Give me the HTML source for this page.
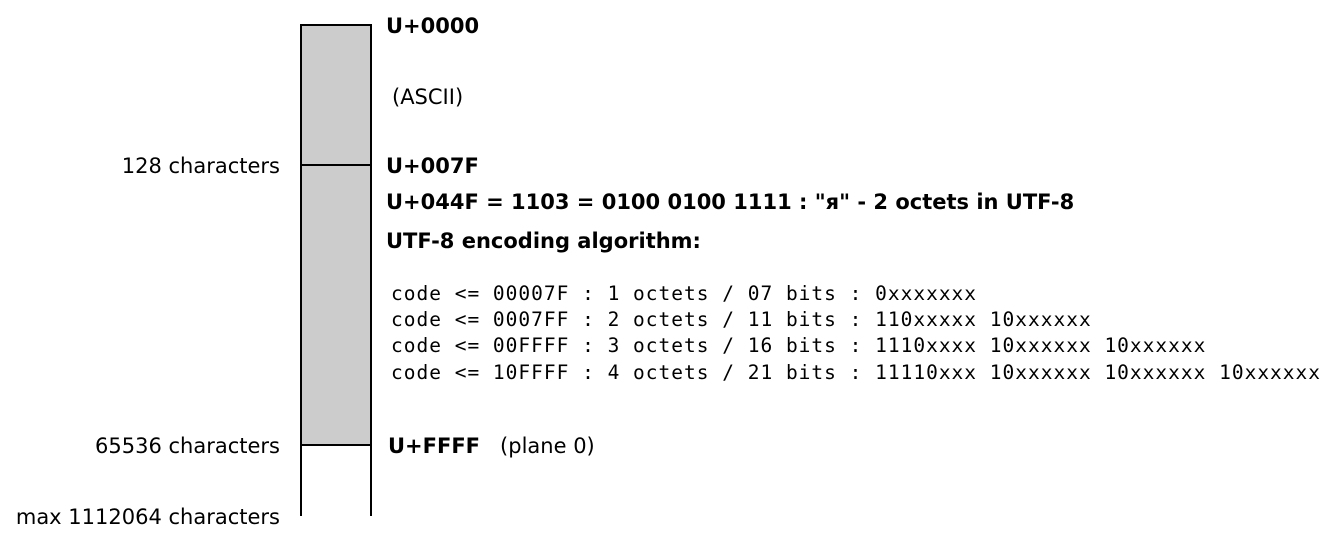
<!DOCTYPE html>
<html><head><meta charset="utf-8"><style>
body{margin:0;width:1329px;height:541px;background:#fff;position:relative;overflow:hidden;font-family:"DejaVu Sans","Liberation Sans",sans-serif;font-size:21px;color:#000}
.t{position:absolute;white-space:pre;line-height:1}
.b{font-weight:bold}
.r{text-align:right;width:280px;left:0}
.m{font-family:"DejaVu Sans Mono","Liberation Mono",monospace;font-size:19.5px;letter-spacing:1.0px}
.l{position:absolute;background:#000}
</style></head><body>
<div style="position:absolute;left:301px;top:25px;width:70px;height:420px;background:#ccc"></div>
<div class="l" style="left:300px;top:24px;width:2px;height:492px"></div>
<div class="l" style="left:370px;top:24px;width:2px;height:492px"></div>
<div class="l" style="left:300px;top:24px;width:72px;height:2px"></div>
<div class="l" style="left:300px;top:164px;width:72px;height:2px"></div>
<div class="l" style="left:300px;top:444px;width:72px;height:2px"></div>

<div class="t b" style="left:386px;top:16px">U+0000</div>
<div class="t" style="left:392px;top:87px">(ASCII)</div>
<div class="t r" style="top:156px">128 characters</div>
<div class="t b" style="left:386px;top:156px">U+007F</div>
<div class="t b" style="left:386px;top:192px">U+044F = 1103 = 0100 0100 1111 : "я" - 2 octets in UTF-8</div>
<div class="t b" style="left:386px;top:231px">UTF-8 encoding algorithm:</div>
<div class="t m" style="left:391px;top:284px">code &lt;= 00007F : 1 octets / 07 bits : 0xxxxxxx</div>
<div class="t m" style="left:391px;top:310px">code &lt;= 0007FF : 2 octets / 11 bits : 110xxxxx 10xxxxxx</div>
<div class="t m" style="left:391px;top:336px">code &lt;= 00FFFF : 3 octets / 16 bits : 1110xxxx 10xxxxxx 10xxxxxx</div>
<div class="t m" style="left:391px;top:363px">code &lt;= 10FFFF : 4 octets / 21 bits : 11110xxx 10xxxxxx 10xxxxxx 10xxxxxx</div>
<div class="t r" style="top:436px">65536 characters</div>
<div class="t" style="left:388px;top:436px"><b>U+FFFF</b>   (plane 0)</div>
<div class="t r" style="top:507px">max 1112064 characters</div>
</body></html>
